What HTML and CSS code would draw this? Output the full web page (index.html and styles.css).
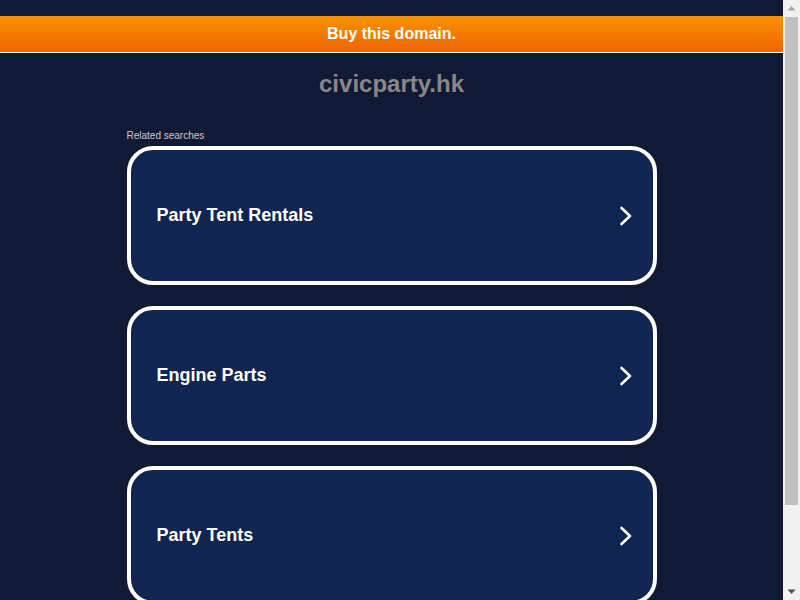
FILE: index.html
```html
<html>
  <head>
    <link rel="stylesheet" href="styles.css">
  </head>
  <body>
    <div class="top">
      <a class="buy" href="#">Buy this domain.</a>
    </div>
    <h1 class="domain">civicparty.hk</h1>
    <div class="wrap">
      <div class="related">Related searches</div>
      <a class="card" href="#">
        <span class="label">Party Tent Rentals</span>
        <svg class="arrow" width="14" height="20" viewBox="0 0 14 20"><path d="M2.5 2 L11 10 L2.5 18" fill="none" stroke="#fff" stroke-width="2.6" stroke-linecap="round" stroke-linejoin="round"/></svg>
      </a>
      <a class="card" href="#">
        <span class="label">Engine Parts</span>
        <svg class="arrow" width="14" height="20" viewBox="0 0 14 20"><path d="M2.5 2 L11 10 L2.5 18" fill="none" stroke="#fff" stroke-width="2.6" stroke-linecap="round" stroke-linejoin="round"/></svg>
      </a>
      <a class="card" href="#">
        <span class="label">Party Tents</span>
        <svg class="arrow" width="14" height="20" viewBox="0 0 14 20"><path d="M2.5 2 L11 10 L2.5 18" fill="none" stroke="#fff" stroke-width="2.6" stroke-linecap="round" stroke-linejoin="round"/></svg>
      </a>
    </div>
    <div class="scrollbar">
      <svg class="sb-btn" width="17" height="17" viewBox="0 0 17 17"><path d="M4.5 10.5 L8.5 6 L12.5 10.5 Z" fill="#a3a3a3"/></svg>
      <div class="sb-track"><div class="sb-thumb"></div></div>
      <svg class="sb-btn" width="17" height="17" viewBox="0 0 17 17"><path d="M4.5 6.5 L8.5 11 L12.5 6.5 Z" fill="#505050"/></svg>
    </div>
  </body>
</html>
```

FILE: styles.css
```css
*{
  margin: 0;
  padding: 0;
  box-sizing: border-box;
}
body{
  background: #111a35;
  font-family: "Liberation Sans", Arial, sans-serif;
  padding-right: 17px;
  padding-bottom: 60px;
}
a{
  text-decoration: none;
}
.top{
  padding-top: 16px;
}
.buy{
  display: block;
  height: 37px;
  line-height: 35px;
  text-align: center;
  color: #fff;
  font-size: 16px;
  font-weight: bold;
  background: linear-gradient(#f79200, #f06300);
  border-bottom: 1px solid #fff;
}
.domain{
  text-align: center;
  color: #888;
  font-size: 24px;
  font-weight: bold;
  margin-top: 17px;
  line-height: 28px;
}
.wrap{
  width: 530px;
  margin: 0 auto;
  padding-top: 32px;
}
.related{
  color: #ccc;
  font-size: 10px;
  line-height: 12px;
  margin-bottom: 4px;
}
.card{
  display: flex;
  align-items: center;
  justify-content: space-between;
  height: 139px;
  margin-bottom: 21px;
  padding: 0 20px 0 26px;
  background: #10254f;
  border: 4px solid #fff;
  border-radius: 26px;
  color: #fff;
}
.label{
  font-size: 18px;
  font-weight: bold;
}
.arrow{
  display: block;
}
.scrollbar{
  position: fixed;
  top: 0;
  right: 0;
  width: 17px;
  height: 100%;
  background: #f1f1f1;
  display: flex;
  flex-direction: column;
}
.sb-btn{
  display: block;
  flex: none;
}
.sb-track{
  flex: 1;
  padding: 0 2px;
}
.sb-thumb{
  height: 488px;
  background: #c1c1c1;
}
```
